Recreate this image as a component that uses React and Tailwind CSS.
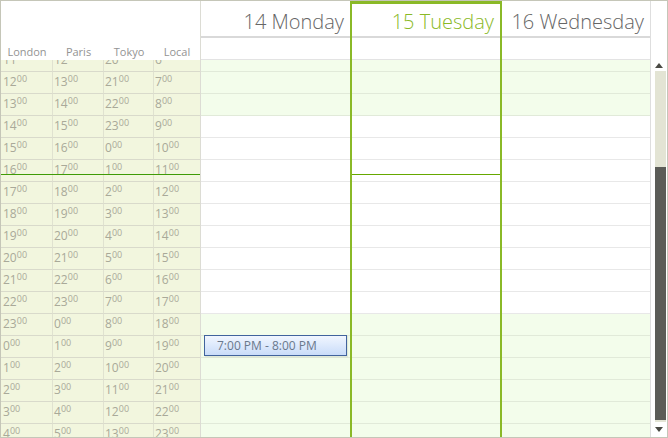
import React from "react";

const hours = Array.from({ length: 18 }, (_, i) => (11 + i) % 24);
const mod = (n) => ((n % 24) + 24) % 24;

function Hr({ h }) {
  return (
    <span className="whitespace-nowrap">
      <span className="text-[12px]">{h}</span>
      <span className="text-[9px] relative -top-[4px]">00</span>
    </span>
  );
}

function TimeRow({ h }) {
  const cells = [
    { v: h, w: "w-[52px]", pl: "pl-[2px]" },
    { v: mod(h + 1), w: "w-[51px]", pl: "pl-[1px]" },
    { v: mod(h + 9), w: "w-[50px]", pl: "pl-[1px]" },
    { v: mod(h - 5), w: "w-[46px]", pl: "pl-[1px]", last: true },
  ];
  return (
    <div className="flex h-[22px]">
      {cells.map((c, i) => (
        <div
          key={i}
          className={`${c.w} ${c.pl} pt-[2px] leading-[12px] text-[#a9a999] border-b border-[#d9dacb] ${
            c.last ? "" : "border-r border-r-[#e0e2d0]"
          }`}
        >
          <Hr h={c.v} />
        </div>
      ))}
    </div>
  );
}

function DayRows() {
  return (
    <div className="-mt-[10px]">
      {hours.map((h, i) => {
        const local = mod(h - 5);
        const off = local < 9 || local >= 18;
        return (
          <div
            key={i}
            className={`h-[22px] border-b ${
              off ? "bg-[#f3fdeb] border-[#e1ead9]" : "bg-white border-[#e8e8e8]"
            }`}
          />
        );
      })}
    </div>
  );
}

function DayHeader({ label, today }) {
  return (
    <div className="flex flex-col">
      <div
        className={`h-[37px] border-b-2 border-[#d9d9d9] text-right pr-[6px] text-[20px] leading-[28px] font-light whitespace-nowrap ${
          today ? "pt-[4px] border-t-[3px] border-t-[#8ab927] text-[#8ab927]" : "pt-[7px] text-[#666666]"
        }`}
      >
        {label}
      </div>
      <div className="h-[22px] border-b border-[#e3e3e3] bg-white" />
    </div>
  );
}

export default function App() {
  return (
    <div className="w-[668px] h-[438px] bg-white border border-[#c5c6b8] flex flex-col overflow-hidden font-['Open_Sans',sans-serif]">
      {/* header */}
      <div className="flex h-[59px] shrink-0">
        <div className="w-[200px] border-r border-[#dcdcd4] flex items-end pb-[1px] text-[11px] leading-[15px] text-[#939393]">
          <div className="w-[52px] text-center">London</div>
          <div className="w-[51px] text-center">Paris</div>
          <div className="w-[50px] text-center">Tokyo</div>
          <div className="w-[46px] text-center">Local</div>
        </div>
        <div className="w-[149px]">
          <DayHeader label="14 Monday" />
        </div>
        <div className="w-[152px] border-x-2 border-[#8ab927]">
          <DayHeader label="15 Tuesday" today />
        </div>
        <div className="w-[149px] border-r border-[#dedede]">
          <DayHeader label="16 Wednesday" />
        </div>
        <div className="w-[16px]" />
      </div>

      {/* body */}
      <div className="flex flex-1 min-h-0">
        <div className="relative w-[200px] border-r border-[#dcdcd4] bg-[#f2f6de] overflow-hidden">
          <div className="-mt-[10px]">
            {hours.map((h, i) => (
              <TimeRow key={i} h={h} />
            ))}
          </div>
          <div className="absolute left-0 right-0 top-[114px] h-px bg-[#3f9b06]" />
        </div>
        <div className="relative w-[149px] overflow-hidden">
          <DayRows />
          <div className="absolute left-[3px] top-[275px] w-[143px] h-[21px] border border-[#41639d] bg-gradient-to-b from-[#f1f6ff] to-[#c9dcf9] shadow-[1px_1px_1px_rgba(0,0,0,0.08)] text-[12px] leading-[19px] text-[#6a788c] pl-[12px] whitespace-nowrap">
            7:00 PM - 8:00 PM
          </div>
        </div>
        <div className="relative w-[152px] border-x-2 border-[#8ab927] overflow-hidden">
          <DayRows />
          <div className="absolute left-0 right-0 top-[114px] h-px bg-[#66a800]" />
        </div>
        <div className="w-[149px] border-r border-[#dedede] overflow-hidden">
          <DayRows />
        </div>
        {/* scrollbar */}
        <div className="w-[16px] flex flex-col items-center bg-white">
          <div className="h-[11px] w-full flex items-center justify-center">
            <svg width="8" height="5" viewBox="0 0 8 5">
              <path d="M4 0 L8 5 L0 5 Z" fill="#4a4a44" />
            </svg>
          </div>
          <div className="flex-1 w-[11px] ml-[2px] flex flex-col bg-[#e3e4d4]">
            <div className="h-[96px]" />
            <div className="h-[253px] bg-[#5b5c57]" />
          </div>
          <div className="h-[15px] w-full flex items-center justify-center">
            <svg width="8" height="5" viewBox="0 0 8 5">
              <path d="M0 0 L8 0 L4 5 Z" fill="#4a4a44" />
            </svg>
          </div>
        </div>
      </div>
    </div>
  );
}
